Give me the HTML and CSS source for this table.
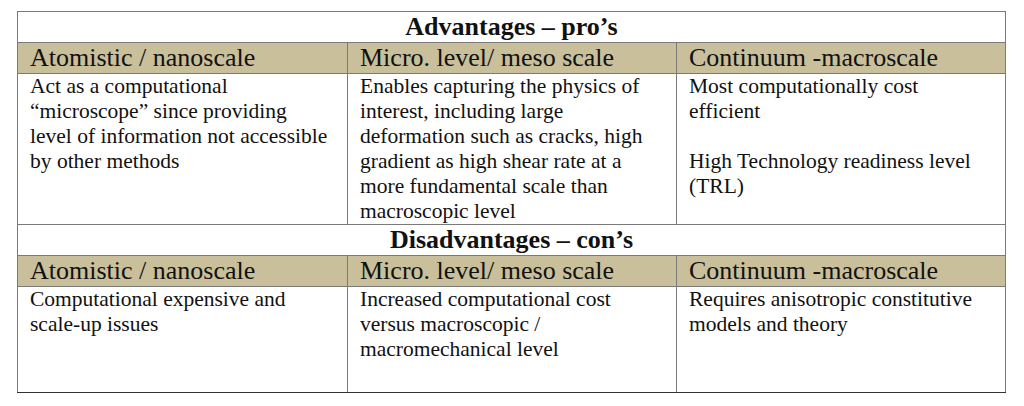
FILE: index.html
```html
<!DOCTYPE html>
<html>
<head>
<meta charset="utf-8">
<link rel="stylesheet" href="styles.css">
</head>
<body>
<table class="cmp">
  <colgroup><col class="c1"><col class="c2"><col class="c3"></colgroup>
  <tr class="title"><th colspan="3">Advantages – pro’s</th></tr>
  <tr class="head"><td>Atomistic / nanoscale</td><td>Micro. level/ meso scale</td><td>Continuum -macroscale</td></tr>
  <tr class="body b1">
    <td>Act as a computational<br>“microscope” since providing<br>level of information not accessible<br>by other methods</td>
    <td>Enables capturing the physics of interest, including large deformation such as cracks, high gradient as high shear rate at a more fundamental scale than macroscopic level</td>
    <td>Most computationally cost efficient<br><br>High Technology readiness level (TRL)</td>
  </tr>
  <tr class="title"><th colspan="3">Disadvantages – con’s</th></tr>
  <tr class="head"><td>Atomistic / nanoscale</td><td>Micro. level/ meso scale</td><td>Continuum -macroscale</td></tr>
  <tr class="body b2">
    <td>Computational expensive and scale-up issues</td>
    <td>Increased computational cost versus macroscopic / macromechanical level</td>
    <td>Requires anisotropic constitutive models and theory</td>
  </tr>
</table>
</body>
</html>
```
FILE: styles.css
```css
html, body {
  margin: 0;
  background: #ffffff;
}
body {
  padding: 11px 0 0 17px;
  font-family: "Liberation Serif", "Times New Roman", serif;
  color: #111;
}
.cmp {
  border-collapse: collapse;
  table-layout: fixed;
  width: 988px;
  border: 1px solid #333;
}
.c1 { width: 330px; }
.c2 { width: 329px; }
.c3 { width: 329px; }
.cmp th, .cmp td {
  border: 1px solid #7a7a7a;
  padding: 0 12px;
  text-align: left;
  vertical-align: top;
}
.cmp .title th {
  text-align: center;
  font-weight: bold;
  font-size: 26px;
  line-height: 30px;
  height: 30px;
  padding: 0;
}
.cmp .head td {
  background: #c9bf9a;
  font-size: 26px;
  line-height: 30px;
  height: 30px;
}
.cmp .body td {
  font-size: 21.5px;
  line-height: 25px;
  padding-top: 0;
}
.cmp .b1 td { height: 150px; }
.cmp .b2 td { height: 105px; }
.cmp tr:last-child td { border-bottom-color: #333; }
```
